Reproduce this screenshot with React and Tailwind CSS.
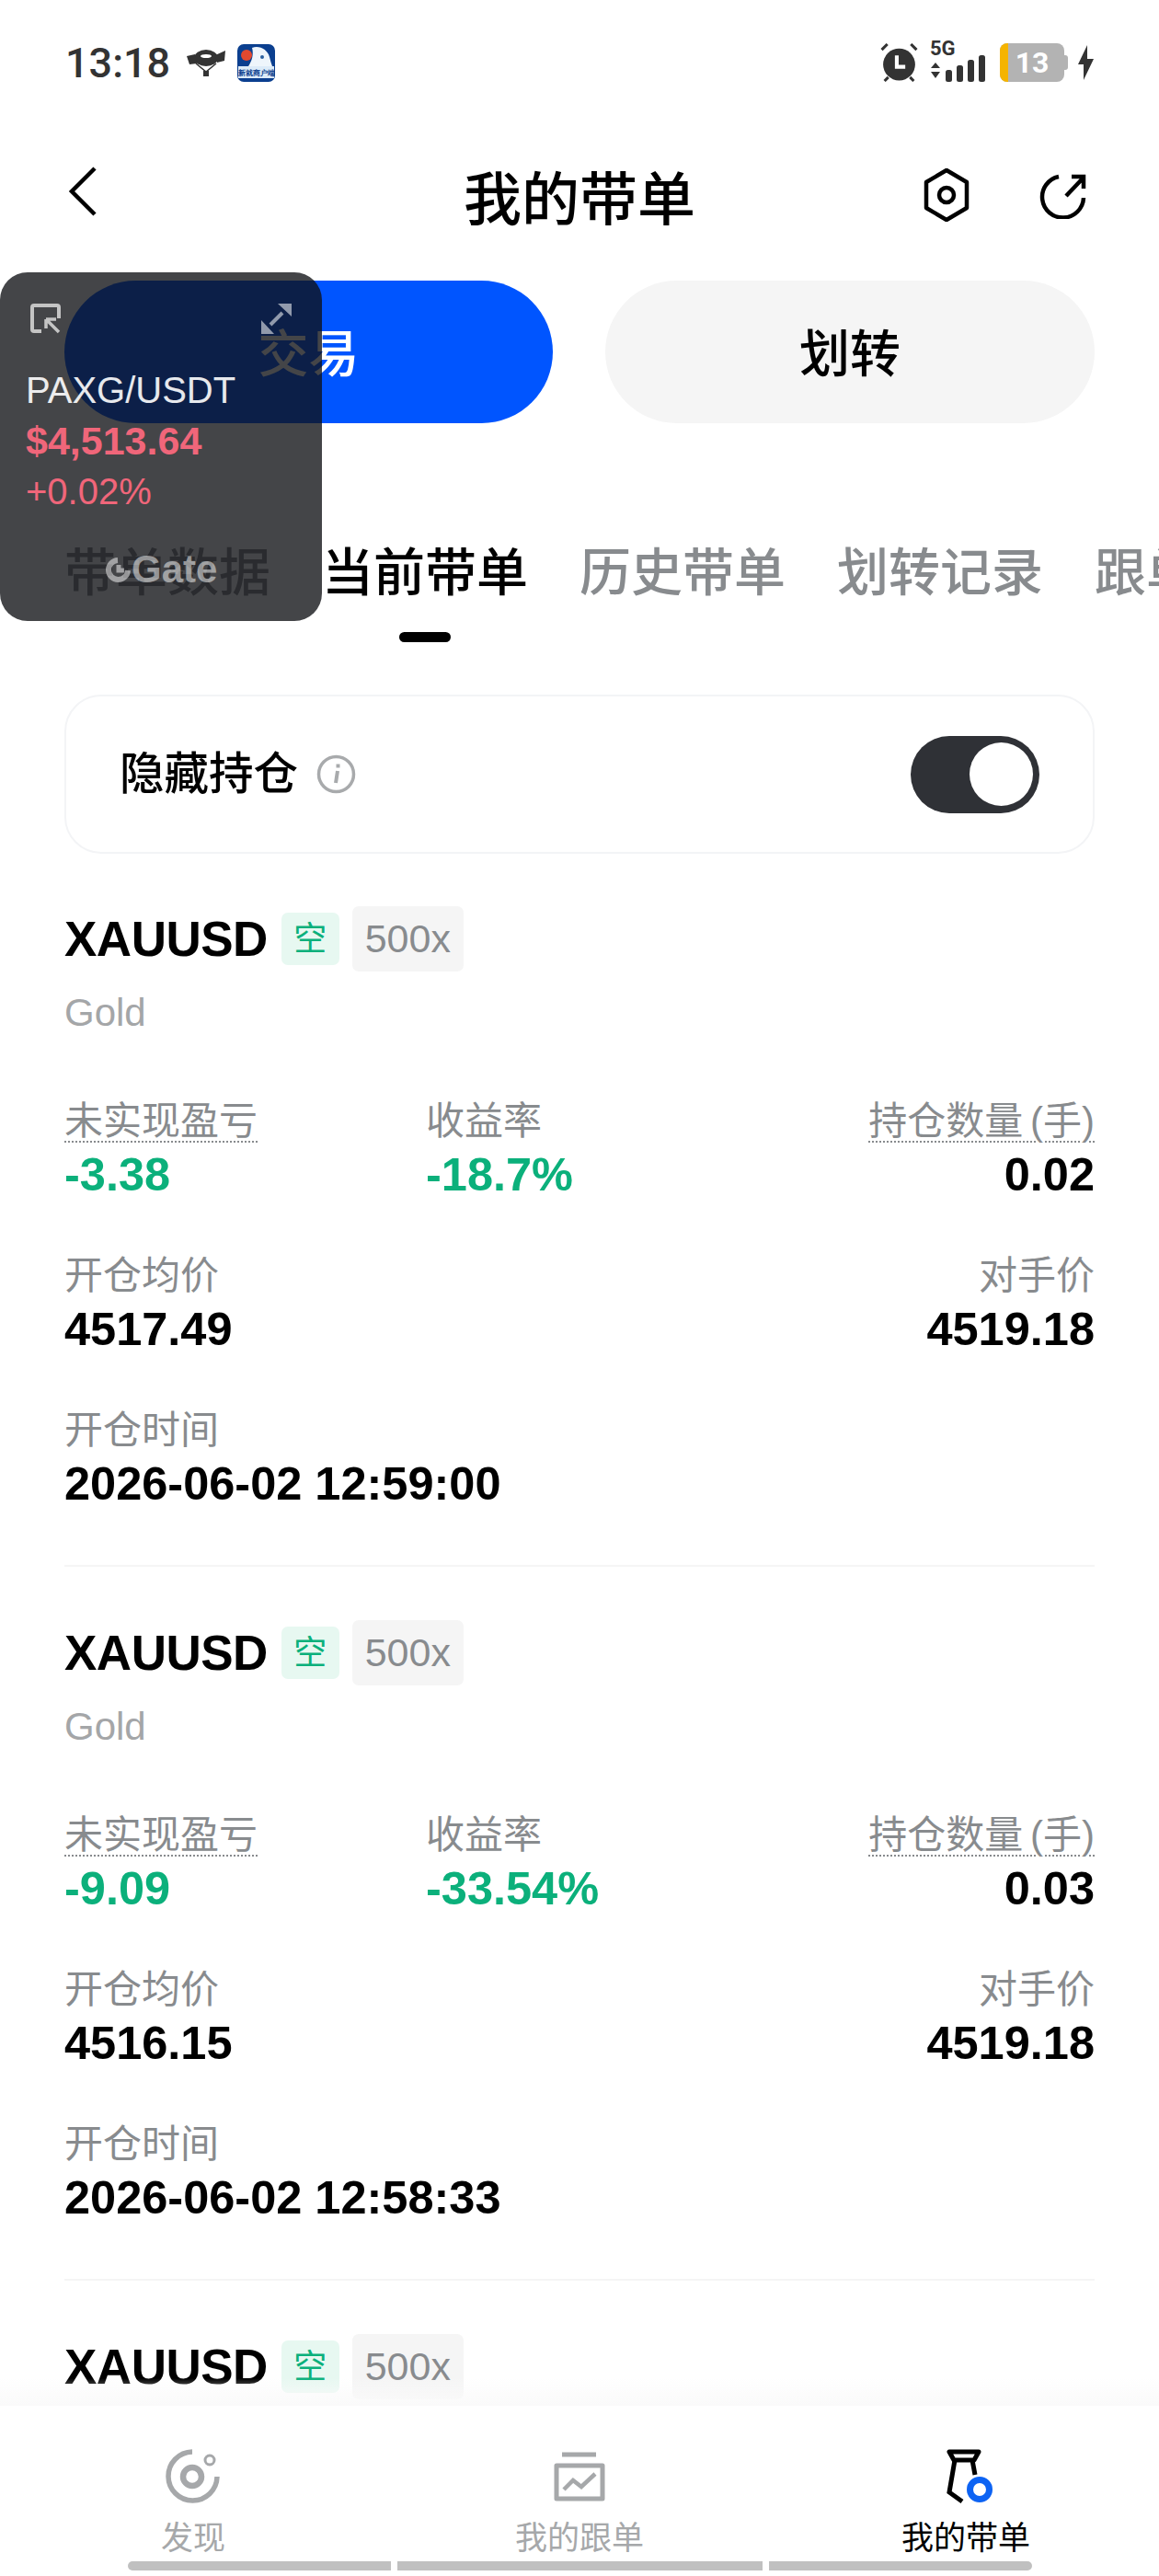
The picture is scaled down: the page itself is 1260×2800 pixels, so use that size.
const sans = { fontFamily: '"Liberation Sans", "Noto Sans CJK SC", sans-serif' };

function BalloonIcon() {
  return (
    <svg width="42" height="30" viewBox="0 0 42 30" fill="#333">
      <ellipse cx="21" cy="10" rx="13" ry="9" />
      <path d="M0 8l9-2 2 10-8 1zM42 2l-11 5 2 8 8-2z" />
      <ellipse cx="21" cy="8" rx="6" ry="2" fill="#fff" />
      <path d="M10 16l11 9 11-9" fill="none" stroke="#333" strokeWidth="1.5" />
      <rect x="18" y="24" width="6" height="6" />
    </svg>
  );
}

function AppBadge() {
  return (
    <div className="relative w-[41px] h-[41px] rounded-[7px] bg-[#0b3f8f] overflow-hidden">
      <svg className="absolute inset-0" width="41" height="41" viewBox="0 0 41 41">
        <circle cx="10" cy="12" r="6" fill="#e2492f" />
        <path d="M16 4c8-3 17 2 19 10 1 4 2 7 3 10H12c4-6 6-13 4-20z" fill="#eef5fb" />
        <circle cx="27" cy="14" r="2" fill="#2a5f9e" />
      </svg>
      <div className="absolute left-[1px] right-[1px] bottom-[4px] h-[13px] bg-[#dcebf8] text-[#0b3f8f] text-[8px] leading-[13px] text-center whitespace-nowrap overflow-hidden font-bold">
        新就商户端
      </div>
    </div>
  );
}

function AlarmIcon() {
  return (
    <svg width="43" height="42" viewBox="0 0 41 41" fill="none">
      <circle cx="20.5" cy="22.5" r="17" fill="#333" />
      <path d="M2 7l6-6M39 7l-6-6M5 40l4-4M36 40l-4-4" stroke="#333" strokeWidth="3" />
      <path d="M18 13v12h9" stroke="#fff" strokeWidth="4" />
    </svg>
  );
}

function SignalIcon() {
  return (
    <div className="relative w-[63px] h-[42px]">
      <span className="absolute left-0 top-[-5px] text-[22px] leading-[22px] font-bold text-[#333]" style={{ fontFamily: '"Roboto", sans-serif' }}>5G</span>
      <svg className="absolute left-0 top-0" width="63" height="42" viewBox="0 0 63 42" fill="#333">
        <path d="M1 27l5-6 5 6zM1 31l5 7 5-7z" />
        <rect x="17" y="29" width="7" height="13" rx="2.5" />
        <rect x="29" y="24" width="7" height="18" rx="2.5" />
        <rect x="41" y="18" width="7" height="24" rx="2.5" />
        <rect x="53" y="13" width="7" height="29" rx="2.5" />
      </svg>
    </div>
  );
}

function BatteryIcon() {
  return (
    <div className="flex items-center">
      <div className="relative w-[70px] h-[42px] rounded-[8px] bg-[#b3b3b3] overflow-hidden flex items-center justify-center">
        <div className="absolute left-0 inset-y-0 w-[9px] bg-[#f5b400]" />
        <span className="text-white text-[32px] leading-none font-bold" style={{ fontFamily: '"Roboto", sans-serif' }}>13</span>
      </div>
      <div className="w-[4px] h-[16px] rounded-r-[3px] bg-[#b3b3b3]" />
    </div>
  );
}

function BoltIcon() {
  return (
    <svg width="17" height="38" viewBox="0 0 17 38" fill="#333">
      <path d="M10 0L0 21h6L6 38 17 15h-7z" />
    </svg>
  );
}

function StatusBar() {
  return (
    <div className="h-[136px] pl-[71px] pr-[71px] flex items-center justify-between">
      <div className="flex items-center">
        <span className="text-[45px] leading-none font-medium text-[#333]" style={{ fontFamily: '"Roboto", sans-serif' }}>13:18</span>
        <div className="ml-[18px]"><BalloonIcon /></div>
        <div className="ml-[13px]"><AppBadge /></div>
      </div>
      <div className="flex items-center">
        <AlarmIcon />
        <div className="ml-[12px]"><SignalIcon /></div>
        <div className="ml-[13px]"><BatteryIcon /></div>
        <div className="ml-[11px]"><BoltIcon /></div>
      </div>
    </div>
  );
}

function TopBar() {
  return (
    <div className="relative h-[156px] flex items-center justify-center">
      <div className="absolute left-[74px] top-[45px]">
        <svg width="32" height="54" viewBox="0 0 32 54" fill="none" stroke="#000" strokeWidth="4.5">
          <path d="M29 2L4 27l25 25" />
        </svg>
      </div>
      <h1 className="pt-[6px] text-[63px] leading-none font-medium text-black" style={sans}>我的带单</h1>
      <div className="absolute left-[1004px] top-[47px]">
        <svg width="50" height="58" viewBox="0 0 50 58" fill="none" stroke="#000" strokeWidth="4.5" strokeLinejoin="round">
          <path d="M25 2l22 13v28L25 56 3 43V15z" />
          <circle cx="25" cy="29" r="8" />
        </svg>
      </div>
      <div className="absolute left-[1129px] top-[52px]">
        <svg width="52" height="50" viewBox="0 0 52 50" fill="none" stroke="#000" strokeWidth="4.5">
          <path d="M22 4A22.5 22.5 0 1 0 49 27" />
          <path d="M30 25L48 6M36 4h13v13" />
        </svg>
      </div>
    </div>
  );
}

function ActionButtons() {
  return (
    <div className="mt-[13px] px-[70px] flex justify-between">
      <button className="w-[531px] h-[155px] pt-[6px] rounded-full bg-[#0055ff] text-white text-[55px] font-medium" style={sans}>交易</button>
      <button className="w-[532px] h-[155px] pt-[6px] rounded-full bg-[#f5f5f5] text-black text-[55px] font-medium" style={sans}>划转</button>
    </div>
  );
}

const tabs = ['带单数据', '当前带单', '历史带单', '划转记录', '跟单'];

function Tabs() {
  return (
    <div className="mt-[110px] pl-[70px] flex gap-[56px] whitespace-nowrap" style={sans}>
      {tabs.map((t) => (
        <div
          key={t}
          className={`relative h-[100px] leading-[106px] text-[56px] font-medium shrink-0 ${t === '当前带单' ? 'text-black' : 'text-[#888b8e]'}`}
        >
          {t}
          {t === '当前带单' && (
            <div className="absolute left-[84px] bottom-[-28px] w-[56px] h-[11px] rounded-full bg-black" />
          )}
        </div>
      ))}
    </div>
  );
}

function HideCard() {
  return (
    <div className="mt-[85px] mx-[70px] h-[173px] rounded-[40px] border-2 border-[#f3f4f6] pl-[58px] pr-[58px] flex items-center justify-between" style={sans}>
      <div className="flex items-center gap-[20px]">
        <span className="text-[48.5px] font-medium text-black">隐藏持仓</span>
        <svg width="43" height="43" viewBox="0 0 43 43" fill="none" stroke="#a8aaac" strokeWidth="3.5">
          <circle cx="21.5" cy="21.5" r="19" />
          <path d="M23 18l-2 13" strokeWidth="4" />
          <path d="M23.5 10.500v4" strokeWidth="4" />
        </svg>
      </div>
      <div className="w-[140px] h-[84px] rounded-full bg-[#2f3136] flex items-center justify-end pr-[7px]">
        <div className="w-[69px] h-[69px] rounded-full bg-white" />
      </div>
    </div>
  );
}

function Stat({ label, value, dotted, green, right }) {
  return (
    <div className={right ? 'text-right' : ''}>
      <div className={`h-[59px] leading-[61px] text-[42px] text-[#888b8e] [word-spacing:-4px] ${dotted ? 'underline decoration-dotted decoration-2 underline-offset-[7px]' : ''}`}>
        {label}
      </div>
      <div className={`h-[59px] leading-[59px] text-[50.5px] font-bold ${green ? 'text-[#0bb07b]' : 'text-black'}`}>
        {value}
      </div>
    </div>
  );
}

function PositionHead() {
  return (
    <div className="h-[71px] flex items-center">
      <span className="text-[53px] leading-none font-bold text-black tracking-[-0.5px]">XAUUSD</span>
      <span className="ml-[15px] w-[63px] h-[57px] rounded-[7px] bg-[#e7f8f1] text-[#0bb07b] text-[36px] flex items-center justify-center">空</span>
      <span className="ml-[14px] w-[121px] h-[71px] rounded-[7px] bg-[#f5f5f5] text-[#888b8e] text-[43px] flex items-center justify-center">500x</span>
    </div>
  );
}

function Position({ pnl, rate, qty, entry, mark, time }) {
  return (
    <div className="mx-[70px] pb-[59px] mb-[58px] border-b-2 border-[#f5f5f5]" style={sans}>
      <PositionHead />
      <div className="mt-[17px] h-[56px] leading-[56px] text-[42px] text-[#a4a6a8]">Gold</div>
      <div className="mt-[59px] flex">
        <div className="w-[393px]"><Stat label="未实现盈亏" value={pnl} dotted green /></div>
        <div className="flex-1"><Stat label="收益率" value={rate} green /></div>
        <Stat label="持仓数量 (手)" value={qty} dotted right />
      </div>
      <div className="mt-[50px] flex justify-between">
        <Stat label="开仓均价" value={entry} />
        <Stat label="对手价" value={mark} right />
      </div>
      <div className="mt-[50px]">
        <Stat label="开仓时间" value={time} />
      </div>
    </div>
  );
}

function FloatingTicker() {
  return (
    <div className="absolute left-0 top-[296px] w-[350px] h-[379px] rounded-[30px] bg-[#0f1114]/78 pl-[28px]" style={sans}>
      <div className="mt-[34px] h-[32px] pl-[5px] pr-[33px] flex justify-between">
        <svg width="33" height="33" viewBox="0 0 33 33" fill="none" stroke="#c4c4c4" strokeWidth="4">
          <path d="M12 30H4a2 2 0 0 1-2-2V4a2 2 0 0 1 2-2h25a2 2 0 0 1 2 2v12" />
          <path d="M17 17h11M17 17v10M18 18l13 13" strokeWidth="3.500" />
        </svg>
        <svg width="33" height="33" viewBox="0 0 33 33" fill="#fff" fillOpacity="0.55">
          <path d="M18 0h15v14zM0 18v15h14z" />
          <path d="M10 23L23 10" stroke="#fff" strokeOpacity="0.55" strokeWidth="4" />
        </svg>
      </div>
      <div className="mt-[35px] h-[55px] leading-[55px] text-[40px] text-white/90">PAXG/USDT</div>
      <div className="h-[55px] leading-[55px] text-[43px] font-bold text-[#f0667a]">$4,513.64</div>
      <div className="h-[55px] leading-[55px] text-[40px] text-[#f0667a]">+0.02%</div>
      <div className="mt-[36px] ml-[87px] flex items-center text-white/50">
        <svg width="27" height="27" viewBox="0 0 27 27" fill="none" stroke="#fff" strokeOpacity="0.5" strokeWidth="6">
          <path d="M13 3a10.500 10.500 0 1 0 11 11" />
          <path d="M14 8v6h6" strokeWidth="5" />
        </svg>
        <span className="ml-[1px] text-[42px] leading-none font-bold">Gate</span>
      </div>
    </div>
  );
}

function BottomNav() {
  return (
    <div className="absolute inset-x-0 bottom-0 h-[185px] bg-white" style={sans}>
      <div className="absolute inset-x-0 top-[-30px] h-[30px] bg-gradient-to-b from-white/0 to-[#fafafa]" />
      <div className="grid grid-cols-3 pt-[45px]">
        <div className="flex flex-col items-center">
          <svg className="h-[64px]" width="60" height="60" viewBox="0 0 60 60" fill="none" stroke="#a6a8aa" strokeWidth="5.500">
            <path d="M29 3A26.500 26.500 0 1 0 56 30" />
            <circle cx="29" cy="30" r="10" strokeWidth="6.500" />
            <circle cx="48" cy="12" r="5" strokeWidth="3" />
          </svg>
          <span className="mt-[4px] h-[56px] leading-[62px] text-[35px] text-[#a6a8aa]">发现</span>
        </div>
        <div className="flex flex-col items-center">
          <svg className="h-[64px]" width="56" height="56" viewBox="0 0 56 56" fill="none" stroke="#a6a8aa" strokeWidth="5">
            <path d="M9 4h37" />
            <path d="M3 16h50v36H3z" strokeLinejoin="round" />
            <path d="M11 42l10-10 9 7 15-14" strokeWidth="4.500" />
          </svg>
          <span className="mt-[4px] h-[56px] leading-[62px] text-[35px] text-[#a6a8aa]">我的跟单</span>
        </div>
        <div className="flex flex-col items-center">
          <svg className="h-[64px] ml-[8px]" width="50" height="60" viewBox="0 0 50 60" fill="none" stroke="#000" strokeWidth="5">
            <path d="M3 3h32l-5 9H8z" strokeLinejoin="round" />
            <path d="M9 12L3 47l14 10M28 12l3 16" />
            <circle cx="36" cy="44" r="10.500" stroke="#0d63f3" strokeWidth="7" />
          </svg>
          <span className="mt-[4px] h-[56px] leading-[62px] text-[35px] text-black">我的带单</span>
        </div>
      </div>
      <div className="pl-[139px] flex gap-[7px]">
        <div className="w-[286px] h-[10px] rounded-l-full bg-[#c0c0c0]" />
        <div className="w-[397px] h-[10px] bg-[#c0c0c0]" />
        <div className="w-[286px] h-[10px] rounded-r-full bg-[#c0c0c0]" />
      </div>
    </div>
  );
}

export default function App() {
  return (
    <div className="relative w-[1260px] h-[2800px] bg-white overflow-hidden">
      <StatusBar />
      <TopBar />
      <ActionButtons />
      <Tabs />
      <HideCard />
      <div className="mt-[57px]">
        <Position pnl="-3.38" rate="-18.7%" qty="0.02" entry="4517.49" mark="4519.18" time="2026-06-02 12:59:00" />
        <Position pnl="-9.09" rate="-33.54%" qty="0.03" entry="4516.15" mark="4519.18" time="2026-06-02 12:58:33" />
        <div className="mx-[70px]" style={sans}><PositionHead /></div>
      </div>
      <FloatingTicker />
      <BottomNav />
    </div>
  );
}
